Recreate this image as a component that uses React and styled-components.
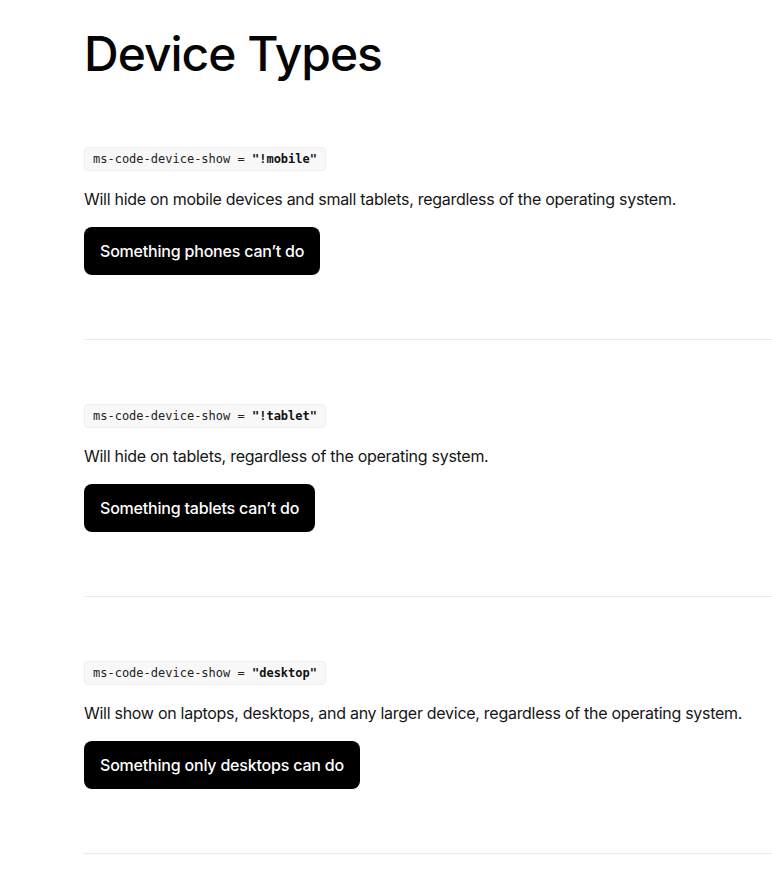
import styled, { createGlobalStyle } from "styled-components"

const GlobalStyle = createGlobalStyle`
  body {
    margin: 0;
    background: #ffffff;
    font-family: Inter, "Noto Sans", sans-serif;
    color: #111111;
  }
`;

const Page = styled.main`
  padding: 25px 0 0 84px;
`;

const Title = styled.h1`
  margin: 0;
  font-size: 48px;
  line-height: 58px;
  font-weight: 500;
  letter-spacing: -1px;
  color: #050505;
`;

const Section = styled.section`
  display: flex;
  flex-direction: column;
  align-items: flex-start;
  gap: 16px;
  padding: 64px 0;
  border-bottom: 1px solid #ebebeb;
`;

const Code = styled.code`
  display: inline-block;
  height: 24px;
  line-height: 22px;
  box-sizing: border-box;
  padding: 0 8px;
  border: 1px solid #efefef;
  border-radius: 4px;
  background: #f8f8f8;
  font-family: "DejaVu Sans Mono", "Liberation Mono", monospace;
  font-size: 12px;
  color: #222222;
  b {
    font-weight: bold;
    color: #111111;
  }
`;

const Text = styled.p`
  margin: 0;
  font-size: 16px;
  line-height: 24px;
  color: #161616;
  letter-spacing: -0.28px;
`;

const Button = styled.a`
  display: inline-flex;
  align-items: center;
  height: 48px;
  padding: 0 16px;
  border-radius: 8px;
  background: #000000;
  color: #ffffff;
  font-size: 16px;
  font-weight: 500;
  letter-spacing: -0.2px;
  text-decoration: none;
  cursor: pointer;
`;

const items = [
  {
    value: "!mobile",
    text: "Will hide on mobile devices and small tablets, regardless of the operating system.",
    button: "Something phones can’t do",
  },
  {
    value: "!tablet",
    text: "Will hide on tablets, regardless of the operating system.",
    button: "Something tablets can’t do",
  },
  {
    value: "desktop",
    text: "Will show on laptops, desktops, and any larger device, regardless of the operating system.",
    button: "Something only desktops can do",
  },
];

export default function App() {
  return (
    <>
      <GlobalStyle />
      <Page>
        <Title>Device Types</Title>
        {items.map((item) => (
          <Section key={item.value}>
            <Code>
              ms-code-device-show = <b>"{item.value}"</b>
            </Code>
            <Text>{item.text}</Text>
            <Button>{item.button}</Button>
          </Section>
        ))}
      </Page>
    </>
  )
}
